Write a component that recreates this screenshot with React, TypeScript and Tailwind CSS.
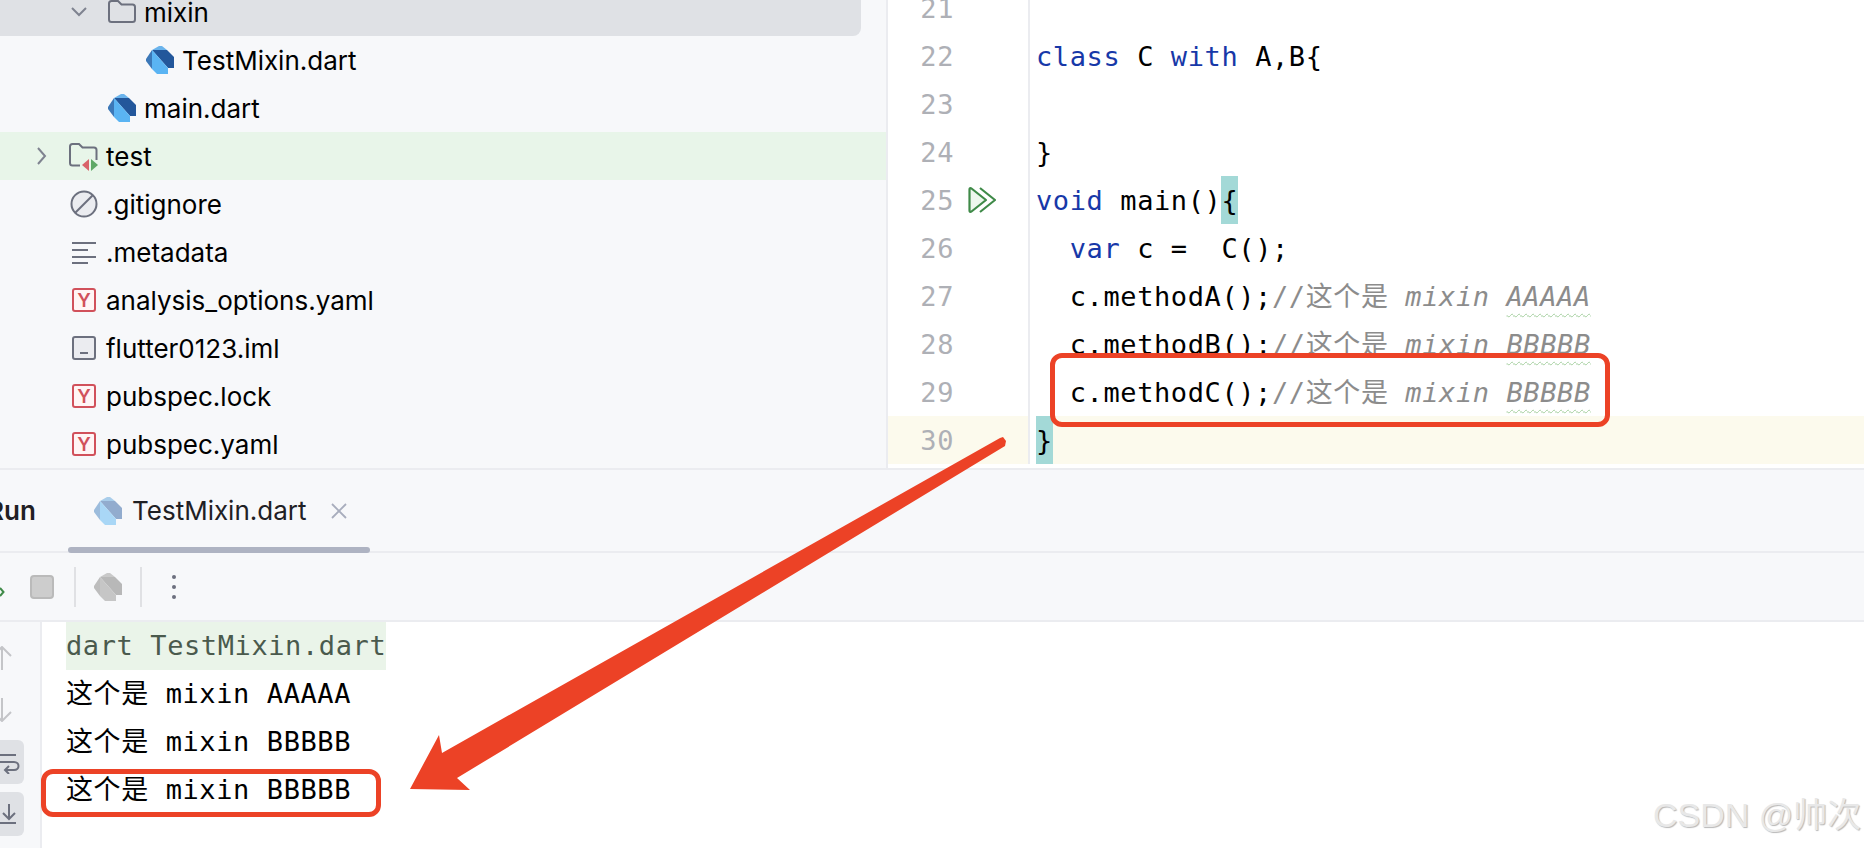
import React from 'react';

const DartIcon: React.FC<{ colors?: [string, string, string, string]; className?: string }> = ({
  colors = ['#6bb4ec', '#23579b', '#5ab4f3', '#3c78b8'],
  className = '',
}) => (
  <svg viewBox="0 0 28 28" className={`h-7 w-7 shrink-0 ${className}`}>
    <polygon points="6,4 13,0 16,0 21,4" fill={colors[0]} />
    <polygon points="6,4 21,4 28,11 28,22 22,22" fill={colors[1]} />
    <polygon points="6,4 22,22 22,28 11,28 6,23" fill={colors[2]} />
    <polygon points="6,4 0,13 0,15 6,23" fill={colors[3]} />
  </svg>
);

const FolderIcon = () => (
  <svg viewBox="0 0 28 28" className="h-7 w-7 shrink-0" fill="none" stroke="#6c707e" strokeWidth="2">
    <path d="M1 5.500C1 4 2 3 3.500 3H10L13.500 6.500H24.500C26 6.500 27 7.500 27 9V21.500C27 23 26 24 24.500 24H3.500C2 24 1 23 1 21.500Z" />
  </svg>
);

const TestFolderIcon = () => (
  <svg viewBox="0 0 30 30" className="h-[30px] w-[30px] shrink-0">
    <path
      d="M11 24.500H3.500C2 24.500 1 23.500 1 22V5.500C1 4 2 3 3.500 3H10L13.500 6.500H25C26.500 6.500 27.500 7.500 27.500 9V19"
      fill="none"
      stroke="#6c707e"
      strokeWidth="2"
    />
    <polygon points="20,18 20,30 13,24" fill="#d9636a" />
    <polygon points="22,18 22,30 29,24" fill="#5fa866" />
  </svg>
);

const IgnoreIcon = () => (
  <svg viewBox="0 0 28 28" className="h-7 w-7 shrink-0" fill="#ebecf0" stroke="#6c707e" strokeWidth="2">
    <circle cx="14" cy="14" r="12.500" />
    <path d="M5 23L23 5" fill="none" />
  </svg>
);

const LinesIcon = () => (
  <svg viewBox="0 0 24 24" className="h-6 w-6 shrink-0" stroke="#6c707e" strokeWidth="2">
    <path d="M0 3H24M0 10H16M0 17H24M0 23H16" fill="none" />
  </svg>
);

const YamlIcon = () => (
  <div className="flex h-6 w-6 shrink-0 items-center justify-center rounded-[3px] border-2 border-[#d1515b] bg-[#fff5f5] text-[19px] font-semibold leading-none text-[#d1515b]">
    Y
  </div>
);

const ImlIcon = () => (
  <div className="flex h-6 w-6 shrink-0 items-end justify-center rounded-[3px] border-2 border-[#6c707e] bg-[#ebecf0] pb-1">
    <div className="h-0.5 w-2 bg-[#6c707e]" />
  </div>
);

const Chevron: React.FC<{ open?: boolean }> = ({ open }) => (
  <svg viewBox="0 0 18 18" className="h-[18px] w-[18px]" fill="none" stroke="#7f8390" strokeWidth="2">
    <path d={open ? 'M2 5L9 12L16 5' : 'M6 1L13 9L6 17'} />
  </svg>
);

const TreeRow: React.FC<{
  label: string;
  pad: string;
  bg?: string;
  icon: React.ReactNode;
  chevron?: 'open' | 'closed';
}> = ({ label, pad, bg = '', icon, chevron }) => (
  <div className={`flex h-12 shrink-0 items-center ${pad} ${bg}`}>
    <div className="flex w-[38px] shrink-0 items-center">
      {chevron && <Chevron open={chevron === 'open'} />}
    </div>
    <div className="flex w-7 shrink-0 items-center justify-center">{icon}</div>
    <span className="ml-2 text-[26px] text-black">{label}</span>
  </div>
);

const Kw: React.FC<{ children: React.ReactNode }> = ({ children }) => (
  <span className="text-[#1738a8]">{children}</span>
);

const Comment: React.FC<{ word: string }> = ({ word }) => (
  <span className="text-[#8c8c8c]">
    //这个是 <span className="italic">mixin </span>
    <span className="italic underline decoration-[#a5cf9f] decoration-wavy decoration-1 underline-offset-[7px]">
      {word}
    </span>
  </span>
);

const RunGutterIcon = () => (
  <svg viewBox="0 0 28 28" className="ml-3.5 h-7 w-7 shrink-0" fill="none" stroke="#3f8a48" strokeWidth="2.200">
    <path d="M1.500 3.500Q1.500 1.500 3.500 2.500L18 14L3.500 25.500Q1.500 26.500 1.500 24.500Z" fill="#eef7ee" strokeLinejoin="round" />
    <path d="M12 2L27 14L12 26" />
  </svg>
);

const codeLines: { n: number; run?: boolean; current?: boolean; code: React.ReactNode }[] = [
  { n: 21, code: null },
  { n: 22, code: <><Kw>class</Kw> C <Kw>with</Kw> A,B{'{'}</> },
  { n: 23, code: null },
  { n: 24, code: '}' },
  { n: 25, run: true, code: <><Kw>void</Kw> main()<span className="inline-block h-12 bg-[#a3d9d7]">{'{'}</span></> },
  { n: 26, code: <>  <Kw>var</Kw> c =  C();</> },
  { n: 27, code: <>  c.methodA();<Comment word="AAAAA" /></> },
  { n: 28, code: <>  c.methodB();<Comment word="BBBBB" /></> },
  { n: 29, code: <>  c.methodC();<Comment word="BBBBB" /></> },
  { n: 30, current: true, code: <span className="inline-block h-12 bg-[#a3d9d7]">{'}'}</span> },
];

const mono = "font-['DejaVu_Sans_Mono','Noto_Sans_CJK_SC',monospace] text-[27px] tracking-[0.6px]";

const RailButton: React.FC<{ d: string }> = ({ d }) => (
  <div className="flex h-11 w-6 items-center justify-end rounded-r-md bg-[#dfe1e5]">
    <svg viewBox="0 0 24 24" className="h-6 w-6" fill="none" stroke="#6c707e" strokeWidth="2">
      <path d={d} />
    </svg>
  </div>
);

export default function App() {
  return (
    <div className="relative h-[848px] w-full overflow-hidden bg-white font-['Inter',sans-serif]">
      {/* top: project tree and editor */}
      <div className="flex h-[468px]">
        <div className="flex w-[888px] shrink-0 flex-col overflow-hidden border-r-2 border-[#ebecf0] bg-[#f7f8fa]">
          <div className="-mt-3 w-[861px] shrink-0 rounded-br-lg bg-[#dfe1e5]">
            <TreeRow label="mixin" pad="pl-[70px]" chevron="open" icon={<FolderIcon />} />
          </div>
          <TreeRow label="TestMixin.dart" pad="pl-[108px]" icon={<DartIcon />} />
          <TreeRow label="main.dart" pad="pl-[70px]" icon={<DartIcon />} />
          <TreeRow label="test" pad="pl-8" bg="bg-[#e8f5e9]" chevron="closed" icon={<TestFolderIcon />} />
          <TreeRow label=".gitignore" pad="pl-8" icon={<IgnoreIcon />} />
          <TreeRow label=".metadata" pad="pl-8" icon={<LinesIcon />} />
          <TreeRow label="analysis_options.yaml" pad="pl-8" icon={<YamlIcon />} />
          <TreeRow label="flutter0123.iml" pad="pl-8" icon={<ImlIcon />} />
          <TreeRow label="pubspec.lock" pad="pl-8" icon={<YamlIcon />} />
          <TreeRow label="pubspec.yaml" pad="pl-8" icon={<YamlIcon />} />
        </div>

        <div className="flex min-w-0 flex-1 flex-col overflow-hidden">
          <div className="-mt-4 flex flex-col">
            {codeLines.map((line) => (
              <div key={line.n} className="flex h-12 shrink-0">
                <div
                  className={`flex w-[142px] shrink-0 items-center border-r-2 border-[#ebecf0] ${
                    line.current ? 'bg-[#fcfaed]' : ''
                  }`}
                >
                  <span className={`w-[66px] pt-0.5 text-right text-[#aeb0b6] ${mono}`}>{line.n}</span>
                  {line.run && <RunGutterIcon />}
                </div>
                <div className="w-1.5 shrink-0" />
                <div
                  className={`h-12 min-w-0 flex-1 overflow-hidden whitespace-pre leading-[50px] text-black ${mono} ${
                    line.current ? 'bg-[#fcfaed]' : ''
                  }`}
                >
                  {line.code}
                </div>
              </div>
            ))}
          </div>
        </div>
      </div>

      {/* bottom: run tool window */}
      <div className="flex h-[380px] flex-col border-t-2 border-[#ebecf0] bg-[#f7f8fa]">
        <div className="relative flex h-[83px] shrink-0 items-center border-b-2 border-[#ebecf0]">
          <span className="-ml-[13px] w-[107px] shrink-0 text-[26px] font-semibold text-[#1f2024]">Run</span>
          <DartIcon colors={['#a9cdea', '#92acce', '#a9d7f6', '#9cbcdc']} />
          <span className="ml-[10px] text-[26px] text-[#1f2024]">TestMixin.dart</span>
          <svg viewBox="0 0 16 16" className="ml-[25px] h-4 w-4" fill="none" stroke="#a8adbd" strokeWidth="1.800">
            <path d="M1 1L15 15M15 1L1 15" />
          </svg>
          <div className="absolute -bottom-0.5 left-[68px] h-[6px] w-[302px] rounded-full bg-[#aeb3c2]" />
        </div>

        <div className="flex h-[69px] shrink-0 items-center border-b-2 border-[#ebecf0]">
          <svg viewBox="0 0 5 10" className="mt-2.5 h-2.5 w-[5px] shrink-0" fill="none" stroke="#3f8a48" strokeWidth="2">
            <path d="M0 1L3.500 5L0 9" />
          </svg>
          <div className="ml-[25px] h-6 w-6 rounded border-2 border-[#bababa] bg-[#cdcdcd]" />
          <div className="ml-5 h-10 w-0.5 bg-[#e0e1e4]" />
          <DartIcon className="ml-[18px]" colors={['#c9c9c9', '#b8b8b8', '#c6c6c6', '#bdbdbd']} />
          <div className="ml-[18px] h-10 w-0.5 bg-[#e0e1e4]" />
          <div className="ml-[30px] flex flex-col gap-[6px]">
            <div className="h-1 w-1 rounded-full bg-[#6c707e]" />
            <div className="h-1 w-1 rounded-full bg-[#6c707e]" />
            <div className="h-1 w-1 rounded-full bg-[#6c707e]" />
          </div>
        </div>

        <div className="flex min-h-0 flex-1">
          <div className="flex w-[42px] shrink-0 flex-col border-r-2 border-[#ebecf0] pt-[24px]">
            <svg viewBox="0 0 24 24" className="-ml-2.5 h-6 w-6" fill="none" stroke="#c4c5c8" strokeWidth="2">
              <path d="M12 24V1M3 10L12 1L21 10" />
            </svg>
            <svg viewBox="0 0 24 24" className="-ml-2.5 mt-7 h-6 w-6" fill="none" stroke="#c4c5c8" strokeWidth="2">
              <path d="M12 0V23M3 14L12 23L21 14" />
            </svg>
            <div className="mt-[18px]">
              <RailButton d="M0 5H16M0 12H14C20 12 20 20 14 20H5M9 16L5 20L9 24" />
            </div>
            <div className="mt-2">
              <RailButton d="M9 2V16M3 11L9 17L15 11M0 21H16" />
            </div>
          </div>
          <div className={`min-w-0 flex-1 bg-white pl-6 leading-[48px] ${mono} whitespace-pre text-black`}>
            <div className="h-12">
              <span className="inline-block h-12 bg-[#eaf4e9] text-[#4a5a4d]">dart TestMixin.dart</span>
            </div>
            <div className="h-12">这个是 mixin AAAAA</div>
            <div className="h-12">这个是 mixin BBBBB</div>
            <div className="h-12">这个是 mixin BBBBB</div>
          </div>
        </div>
      </div>

      {/* annotations drawn over the screenshot */}
      <div className="absolute left-[1050px] top-[353px] h-[74px] w-[560px] rounded-xl border-[5px] border-[#ec4226]" />
      <div className="absolute left-[41px] top-[769px] h-[48px] w-[340px] rounded-xl border-[5px] border-[#ec4226]" />
      <svg className="pointer-events-none absolute left-0 top-0 h-[848px] w-[1864px]" viewBox="0 0 1864 848">
        <polygon
          points="1000,438 1003,437 1006,441 1005,446 457,778 470,790 410,789 439,735 442,753"
          fill="#ec4226"
        />
      </svg>
      <div className="absolute left-[1653px] top-[793px] font-['Liberation_Sans','Noto_Sans_CJK_SC',sans-serif] text-[34px] leading-[44px] text-[#e8e8e8] [text-shadow:1px_1px_1px_#b8b8b8]">
        CSDN @帅次
      </div>
    </div>
  );
}
